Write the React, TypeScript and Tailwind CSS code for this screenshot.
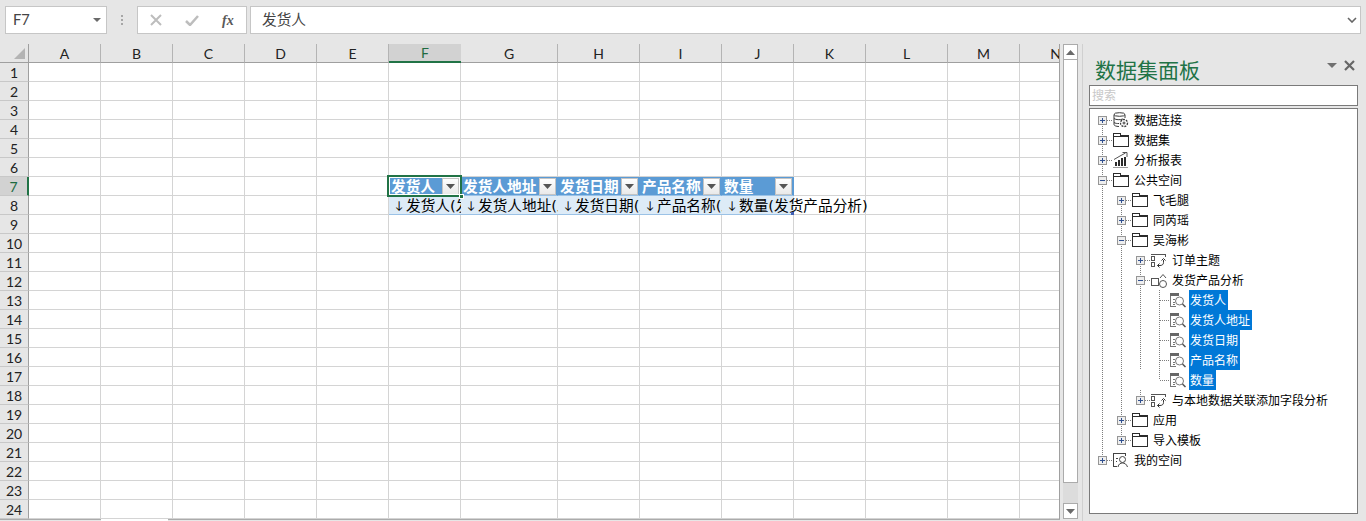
import React from 'react';

const COLUMNS = ['A', 'B', 'C', 'D', 'E', 'F', 'G', 'H', 'I', 'J', 'K', 'L', 'M', 'N'];
const ROW_NUMBERS = Array.from({ length: 24 }, (_, i) => i + 1);

const tableHeaders: Record<string, string> = {
  F: '发货人',
  G: '发货人地址',
  H: '发货日期',
  I: '产品名称',
  J: '数量',
};

const tableFields: Record<string, string> = {
  F: '发货人(发货产品分析)',
  G: '发货人地址(发货产品分析)',
  H: '发货日期(发货产品分析)',
  I: '产品名称(发货产品分析)',
  J: '数量(发货产品分析)',
};

type IconName = 'db' | 'folder' | 'chart' | 'report' | 'model' | 'field' | 'person';

interface TreeRow {
  level: number;
  pass: number[];
  top: boolean;
  bottom: boolean;
  toggle: 'plus' | 'minus' | 'none';
  icon: IconName;
  label: string;
  selected?: boolean;
}

const treeRows: TreeRow[] = [
  { level: 0, pass: [], top: false, bottom: true, toggle: 'plus', icon: 'db', label: '数据连接' },
  { level: 0, pass: [], top: true, bottom: true, toggle: 'plus', icon: 'folder', label: '数据集' },
  { level: 0, pass: [], top: true, bottom: true, toggle: 'plus', icon: 'chart', label: '分析报表' },
  { level: 0, pass: [], top: true, bottom: true, toggle: 'minus', icon: 'folder', label: '公共空间' },
  { level: 1, pass: [0], top: false, bottom: true, toggle: 'plus', icon: 'folder', label: '飞毛腿' },
  { level: 1, pass: [0], top: true, bottom: true, toggle: 'plus', icon: 'folder', label: '同芮瑶' },
  { level: 1, pass: [0], top: true, bottom: true, toggle: 'minus', icon: 'folder', label: '吴海彬' },
  { level: 2, pass: [0, 1], top: false, bottom: true, toggle: 'plus', icon: 'report', label: '订单主题' },
  { level: 2, pass: [0, 1], top: true, bottom: true, toggle: 'minus', icon: 'model', label: '发货产品分析' },
  { level: 3, pass: [0, 1, 2], top: true, bottom: true, toggle: 'none', icon: 'field', label: '发货人', selected: true },
  { level: 3, pass: [0, 1, 2], top: true, bottom: true, toggle: 'none', icon: 'field', label: '发货人地址', selected: true },
  { level: 3, pass: [0, 1, 2], top: true, bottom: true, toggle: 'none', icon: 'field', label: '发货日期', selected: true },
  { level: 3, pass: [0, 1, 2], top: true, bottom: true, toggle: 'none', icon: 'field', label: '产品名称', selected: true },
  { level: 3, pass: [0, 1], top: true, bottom: false, toggle: 'none', icon: 'field', label: '数量', selected: true },
  { level: 2, pass: [0, 1], top: true, bottom: false, toggle: 'plus', icon: 'report', label: '与本地数据关联添加字段分析' },
  { level: 1, pass: [0], top: true, bottom: true, toggle: 'plus', icon: 'folder', label: '应用' },
  { level: 1, pass: [0], top: true, bottom: false, toggle: 'plus', icon: 'folder', label: '导入模板' },
  { level: 0, pass: [], top: true, bottom: false, toggle: 'plus', icon: 'person', label: '我的空间' },
];

const Guide: React.FC<{ pass?: boolean; row?: TreeRow }> = ({ pass, row }) => (
  <svg width="19" height="20" className="shrink-0" shapeRendering="crispEdges">
    <g stroke="#7d7d7d" strokeDasharray="1 1" fill="none">
      {pass && <path d="M9.5 0V20" />}
      {row && row.top && <path d="M9.5 0V10" />}
      {row && row.bottom && <path d="M9.5 10V20" />}
      {row && <path d="M10 10.5H19" />}
    </g>
    {row && row.toggle !== 'none' && (
      <g>
        <rect x="5.5" y="6.5" width="8" height="8" fill="#eeeeee" stroke="#969696" />
        <path d="M7 10.5H12" stroke="#2f4f8f" />
        {row.toggle === 'plus' && <path d="M9.5 8V13" stroke="#2f4f8f" />}
      </g>
    )}
  </svg>
);

const TreeIcon: React.FC<{ name: IconName }> = ({ name }) => {
  if (name === 'folder') {
    return (
      <svg width="17" height="16" className="shrink-0" fill="none" stroke="#2b2b2b" shapeRendering="crispEdges">
        <path d="M1.5 14.5V1.5H8.5V3.5H16.5V14.5ZM1.5 4.5H16.5" />
      </svg>
    );
  }
  if (name === 'db') {
    return (
      <svg width="17" height="16" className="shrink-0" fill="none" stroke="#3a3a3a">
        <ellipse cx="7.5" cy="2.5" rx="5.5" ry="1.8" />
        <path d="M2 2.5V12.5C2 13.5 4 14.5 7 14.5M13 2.5V6M2 6.5C4 8 8 8 11 7M2 10.5C3.5 11.5 5 11.5 7 11.5" />
        <circle cx="12" cy="11" r="3.5" strokeDasharray="2 1" strokeWidth="1.3" />
        <circle cx="12" cy="11" r="1" />
      </svg>
    );
  }
  if (name === 'chart') {
    return (
      <svg width="17" height="16" className="shrink-0" fill="none" stroke="#2b2b2b" shapeRendering="crispEdges">
        <path d="M4 14V10M7 14V8M10 14V6M13 14V5" strokeWidth="2" />
        <path d="M1 15.5H16" stroke="#9a9a9a" />
        <path d="M2 7.5L8 4L13.5 1M10.5 0.5H15V5" stroke="#555555" shapeRendering="auto" />
      </svg>
    );
  }
  if (name === 'report') {
    return (
      <svg width="17" height="16" className="shrink-0" fill="none" stroke="#555555">
        <path d="M1 2.5H15" strokeWidth="1.5" shapeRendering="crispEdges" />
        <path d="M15.5 2V5" shapeRendering="crispEdges" />
        <rect x="1.5" y="4.5" width="3" height="4" shapeRendering="crispEdges" />
        <rect x="1.5" y="10.5" width="3" height="4" shapeRendering="crispEdges" />
        <path d="M13.5 8V10.5C13.5 12.5 12 13.5 10 13.5H7.5" stroke="#333333" />
        <path d="M11.5 8.5L13.5 6.5L15.5 8.5M9.5 11.5L7.5 13.5L9.5 15.5" stroke="#333333" />
      </svg>
    );
  }
  if (name === 'model') {
    return (
      <svg width="17" height="16" className="shrink-0" fill="none" stroke="#555555">
        <rect x="1.5" y="6.5" width="7" height="7" shapeRendering="crispEdges" />
        <circle cx="13" cy="12" r="3.5" />
        <path d="M10 6L13 2.5L16 6" />
      </svg>
    );
  }
  if (name === 'field') {
    return (
      <svg width="17" height="16" className="shrink-0" fill="none">
        <rect x="1" y="1" width="9" height="3" fill="#666666" />
        <path d="M1.5 4V14.5H7M4 7.5H6M4 10H6M4 12.5H6" stroke="#777777" shapeRendering="crispEdges" />
        <circle cx="10.5" cy="9" r="4" stroke="#777777" fill="#ffffff" />
        <path d="M13.5 12L16.5 15" stroke="#555555" strokeWidth="1.5" />
      </svg>
    );
  }
  return (
    <svg width="17" height="16" className="shrink-0" fill="none" stroke="#444444">
      <path d="M5 14.5H1.5V1.5H13.5V4" shapeRendering="crispEdges" />
      <path d="M3.5 6.5H6M3.5 9.5H5" shapeRendering="crispEdges" />
      <circle cx="10.5" cy="7.5" r="3" />
      <path d="M6 15C6.5 12 8.5 11 10.5 11C12.5 11 14.5 12 15.5 15" />
    </svg>
  );
};

const FilterButton: React.FC = () => (
  <div className="w-[17px] h-[17px] shrink-0 flex items-center justify-center border border-[#c4c4c4] bg-linear-to-b from-white to-[#e9e9e9]">
    <svg width="9" height="5" fill="#555555">
      <path d="M0 0H9L4.5 5Z" />
    </svg>
  </div>
);

const Cell: React.FC<{ col: string; row: number }> = ({ col, row }) => {
  if (row === 7 && tableHeaders[col]) {
    return (
      <div className="flex items-center justify-between overflow-hidden bg-[#5b9bd5] border-b border-r border-b-[#9bc2e6] border-r-[#5b9bd5] pl-[2px] pr-[1px] text-white font-bold text-[14.67px] whitespace-nowrap">
        <span className="pt-[1px]">{tableHeaders[col]}</span>
        <FilterButton />
      </div>
    );
  }
  if (row === 8 && tableFields[col]) {
    return (
      <div
        className={`flex items-center bg-[#ddebf7] border-b border-[#9bc2e6] pl-[3px] pt-[1px] text-[14.67px] text-black whitespace-nowrap ${
          col === 'J' ? 'overflow-visible relative z-10' : 'overflow-hidden'
        }`}
      >
        <span className="inline-block w-[14px] shrink-0 text-center text-[11px]">↓</span>
        <span className="font-['DejaVu_Sans','Noto_Sans_CJK_SC',sans-serif]">{tableFields[col]}</span>
        {col === 'J' && <div className="absolute right-0 bottom-[-1px] w-[3px] h-[3px] bg-[#3f5fb5]" />}
      </div>
    );
  }
  return <div className="border-r border-b border-[#d4d4d4]" />;
};

const App: React.FC = () => {
  return (
    <div className="w-[1366px] h-[521px] overflow-hidden bg-[#e6e6e6] flex flex-col font-['Lato','Noto_Sans_CJK_SC',sans-serif] text-black">
      {/* Formula bar */}
      <div className="flex h-[28px] mt-[6px] ml-[5px] shrink-0">
        <div className="w-[102px] flex items-center justify-between bg-white border border-[#c6c6c6] pl-[7px] pr-[5px] text-[14.67px] text-[#444444]">
          <span>F7</span>
          <svg width="8" height="4" fill="#6a6a6a">
            <path d="M0 0H8L4 4Z" />
          </svg>
        </div>
        <div className="w-[30px] flex flex-col items-center justify-center gap-[2px]">
          <div className="w-[2px] h-[2px] bg-[#a6a6a6]" />
          <div className="w-[2px] h-[2px] bg-[#a6a6a6]" />
          <div className="w-[2px] h-[2px] bg-[#a6a6a6]" />
        </div>
        <div className="w-[110px] flex items-center bg-white border border-[#c6c6c6]">
          <svg width="12" height="12" className="ml-[12px]" stroke="#bdbdbd" strokeWidth="2" fill="none">
            <path d="M1 1L11 11M11 1L1 11" />
          </svg>
          <svg width="14" height="12" className="ml-[23px]" stroke="#bdbdbd" strokeWidth="2.5" fill="none">
            <path d="M1 7L5 11L13 2" />
          </svg>
          <span className="ml-[23px] font-['Liberation_Serif',serif] italic font-bold text-[14px] text-[#595959]">fx</span>
        </div>
        <div className="w-[1111px] ml-[3px] flex items-center justify-between bg-white border border-[#c6c6c6] pl-[11px] pr-[3px] text-[14.67px] text-[#444444]">
          <span>发货人</span>
          <svg width="10" height="6" stroke="#666666" strokeWidth="1.6" fill="none">
            <path d="M1 1L5 5L9 1" />
          </svg>
        </div>
      </div>

      <div className="flex mt-[10px] flex-1 min-h-0">
        {/* Worksheet */}
        <div className="w-[1060px] shrink-0 flex flex-col">
          <div className="relative flex-1 min-h-0 overflow-hidden bg-white border-r border-[#a0a0a0] grid grid-cols-[29px_72px_72px_72px_72px_72px_72px_97px_82px_82px_72px_72px_82px_72px_72px] auto-rows-[19px] text-[14px] text-[#222222]">
            <div className="bg-[#e6e6e6] border-r border-b border-[#9f9f9f] flex items-end justify-end pr-[3px] pb-[3px]">
              <svg width="11" height="11" fill="#b4b4b4">
                <path d="M11 0V11H0Z" />
              </svg>
            </div>
            {COLUMNS.map((col) => (
              <div
                key={col}
                className={`flex items-center justify-center ${
                  col === 'F'
                    ? 'bg-[#d2d2d2] border-b-2 border-[#217346] text-[#1e6b41]'
                    : 'bg-[#e6e6e6] border-b border-r border-b-[#9f9f9f] border-r-[#b4b4b4]'
                }`}
              >
                {col}
              </div>
            ))}
            {ROW_NUMBERS.map((row) => (
              <React.Fragment key={row}>
                <div
                  className={`flex items-center justify-center border-b border-b-[#c8c8c8] ${
                    row === 7
                      ? 'bg-[#d2d2d2] border-r-2 border-r-[#217346] text-[#1e6b41]'
                      : 'bg-[#e6e6e6] border-r border-r-[#9f9f9f]'
                  }`}
                >
                  {row}
                </div>
                {COLUMNS.map((col) => (
                  <Cell key={col} col={col} row={row} />
                ))}
              </React.Fragment>
            ))}
            {/* Active cell outline on F7 */}
            <div className="absolute left-[387px] top-[131px] w-[75px] h-[22px] border-2 border-[#217346] outline outline-white -outline-offset-3" />
            <div className="absolute left-[459px] top-[150px] w-[5px] h-[5px] bg-[#217346] border border-white" />
          </div>
          {/* Sheet tab strip */}
          <div className="h-[2px] shrink-0 flex">
            <div className="w-[101px] border-t border-[#ababab]" />
            <div className="w-[67px] bg-white" />
            <div className="flex-1 border-t border-[#ababab]" />
          </div>
        </div>

        {/* Vertical scrollbar */}
        <div className="w-[15px] ml-[3px] h-[475px] shrink-0 flex flex-col">
          <div className="h-[16px] shrink-0 flex items-center justify-center bg-white border border-[#ababab]">
            <svg width="9" height="5" fill="#6a6a6a">
              <path d="M0 5H9L4.5 0Z" />
            </svg>
          </div>
          <div className="h-[423px] shrink-0 bg-white border-x border-b border-[#ababab]" />
          <div className="flex-1 bg-[#dcdcdc]" />
          <div className="h-[16px] shrink-0 flex items-center justify-center bg-white border border-[#ababab]">
            <svg width="9" height="5" fill="#6a6a6a">
              <path d="M0 0H9L4.5 5Z" />
            </svg>
          </div>
        </div>

        {/* Data set panel */}
        <div className="w-[284px] ml-[4px] shrink-0 border-l border-[#d0d0d0] pl-[6px] flex flex-col">
          <div className="h-[41px] w-[270px] shrink-0 flex items-start justify-between pt-[12px] pl-[6px] pr-[4px]">
            <span className="text-[21px] leading-[28px] text-[#217346]">数据集面板</span>
            <div className="flex items-center gap-[7px] pt-[4px]">
              <svg width="10" height="5" fill="#707070">
                <path d="M0 0H10L5 5Z" />
              </svg>
              <svg width="11" height="11" stroke="#666666" strokeWidth="2.2" fill="none">
                <path d="M1 1L10 10M10 1L1 10" />
              </svg>
            </div>
          </div>
          <div className="w-[269px] h-[21px] shrink-0 bg-white border border-[#7a7a7a] flex items-center pl-[2px] text-[12px] text-[#c8c8c8]">
            搜索
          </div>
          <div className="w-[269px] h-[406px] mt-[2px] shrink-0 bg-white border border-[#7a7a7a] pt-[1px] pl-[3px] font-['Noto_Sans_CJK_SC',sans-serif] text-[12px]">
            {treeRows.map((row) => (
              <div key={row.label} className="h-[20px] flex items-center whitespace-nowrap">
                {Array.from({ length: row.level }, (_, i) => (
                  <Guide key={i} pass={row.pass.includes(i)} />
                ))}
                <Guide row={row} />
                <TreeIcon name={row.icon} />
                {row.selected ? (
                  <span className="ml-[3px] h-[20px] leading-[20px] pl-[1px] pr-[2px] bg-[#0078d7] text-white">{row.label}</span>
                ) : (
                  <span className="ml-[5px]">{row.label}</span>
                )}
              </div>
            ))}
          </div>
        </div>
      </div>
    </div>
  );
};

export default App;
